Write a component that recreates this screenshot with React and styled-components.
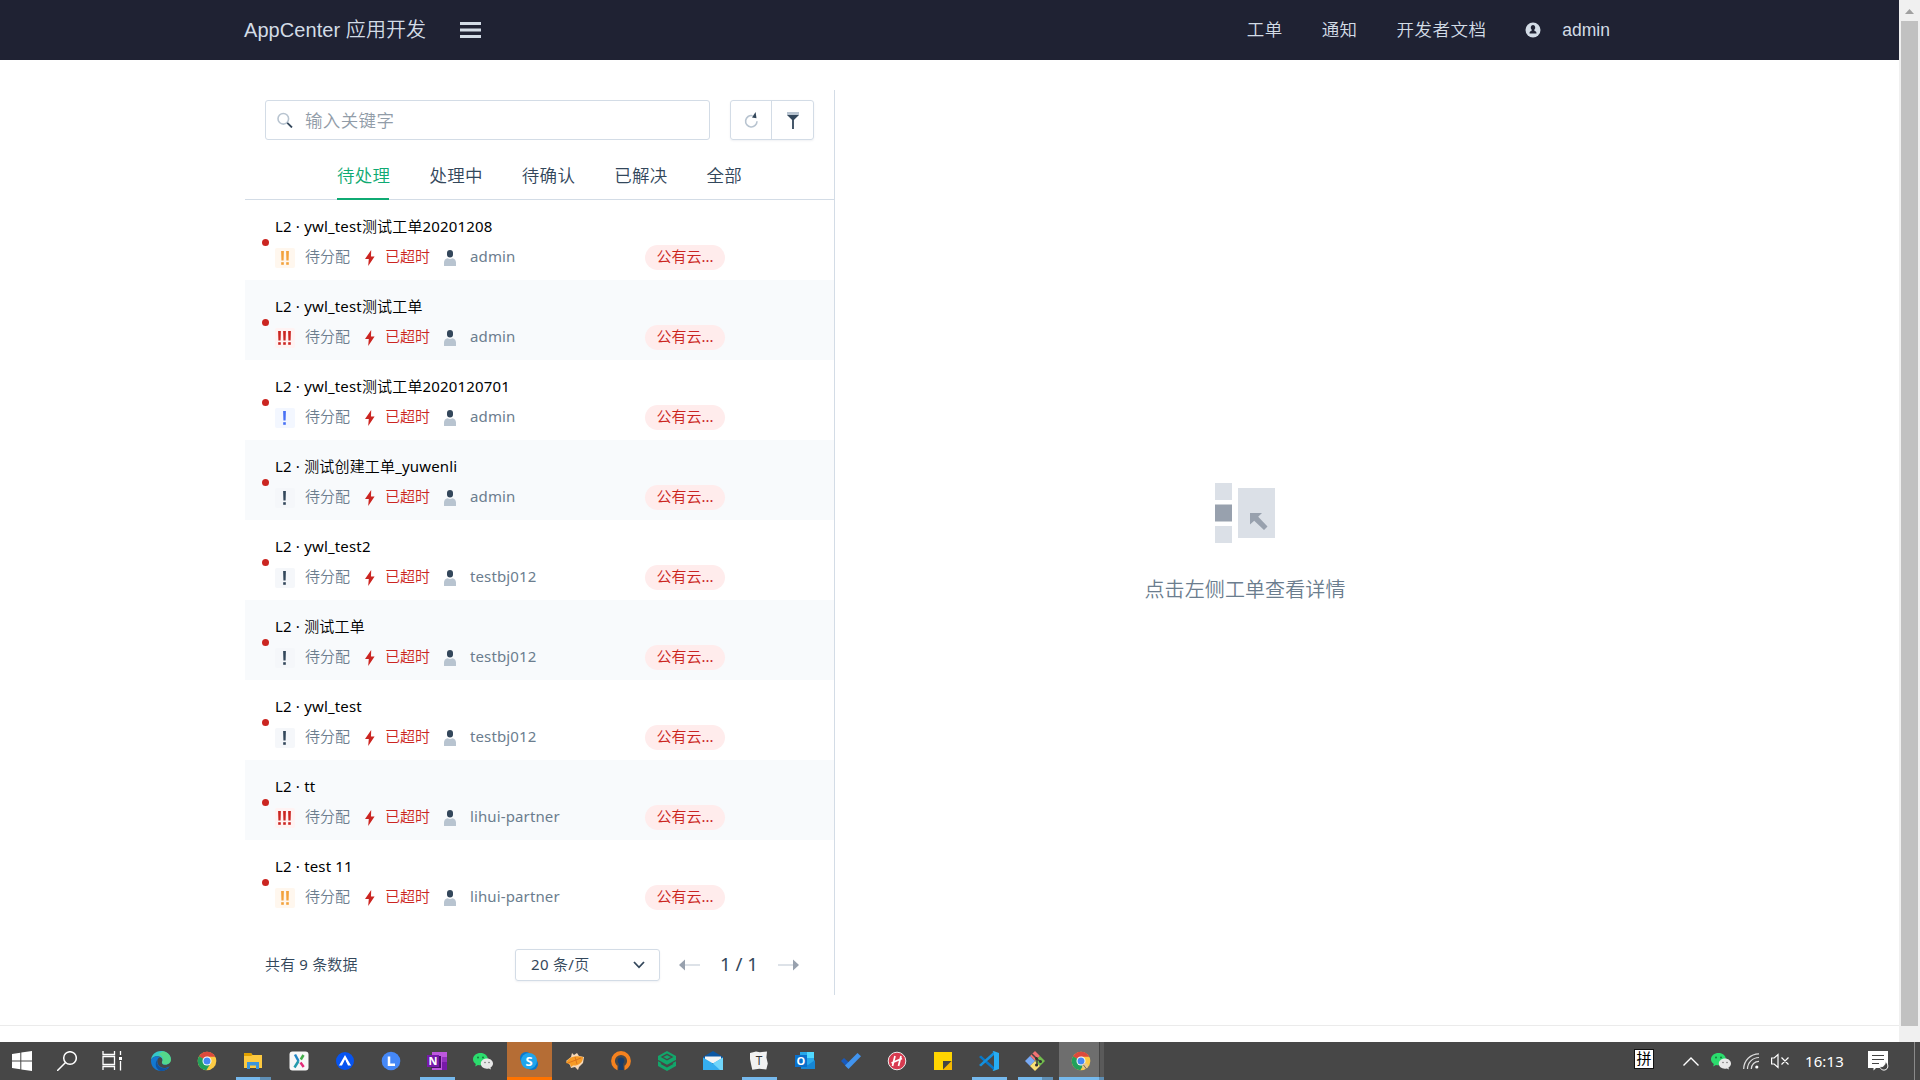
import React from 'react';
import styled, { createGlobalStyle, css } from 'styled-components';

const Global = createGlobalStyle`
  * { box-sizing: border-box; }
  html, body { margin: 0; padding: 0; background: #fff; overflow: hidden; }
  body { font-family: "Noto Sans", "Noto Sans CJK SC DemiLight", "Noto Sans CJK SC", sans-serif; }
  svg { display: block; flex: none; }
`;

const Screen = styled.div`
  width: 1920px;
  height: 1080px;
  display: flex;
  flex-direction: column;
  overflow: hidden;
`;
const Browser = styled.div`
  height: 1042px;
  display: flex;
`;
const Page = styled.div`
  width: 1899px;
  height: 1042px;
  display: flex;
  flex-direction: column;
`;
const ScrollTrack = styled.div`
  width: 21px;
  background: #f0f0f0;
  display: flex;
  flex-direction: column;
  align-items: center;
  padding-right: 1px;
`;
const ScrollUp = styled.div`
  height: 21px;
  padding-top: 9px;
`;
const ScrollThumb = styled.div`
  width: 17px;
  height: 1005px;
  background: #c1c1c1;
`;

const Header = styled.header`
  height: 60px;
  flex: none;
  background: #1f2233;
  color: #d3dce6;
  display: flex;
  align-items: center;
  padding: 0 289px 0 244px;
  font-family: "Liberation Sans", "Noto Sans CJK SC DemiLight", "Noto Sans CJK SC", sans-serif;
`;
const Brand = styled.div`
  width: 216px;
  font-size: 20px;
  line-height: 30px;
  letter-spacing: 0.07px;
  white-space: nowrap;
`;
const Nav = styled.nav`
  margin-left: auto;
  display: flex;
  align-items: center;
  gap: 39px;
  font-size: 17.5px;
  line-height: 28px;
  white-space: nowrap;
`;
const NavLink = styled.span`
  letter-spacing: 0.45px;
`;
const Account = styled.div`
  display: flex;
  align-items: center;
  gap: 21px;
`;

const Main = styled.main`
  width: 1410px;
  height: 905px;
  margin: 30px 0 30px 245px;
  display: flex;
`;
const ListPane = styled.section`
  width: 590px;
  border-right: 1px solid #d3dce6;
  display: flex;
  flex-direction: column;
`;
const SearchBar = styled.div`
  display: flex;
  gap: 20px;
  padding: 10px 20px 0;
`;
const SearchBox = styled.div`
  width: 445px;
  height: 40px;
  border: 1px solid #d3dce6;
  border-radius: 3px;
  display: flex;
  align-items: center;
  padding-left: 11px;
  gap: 12px;
  font-size: 17.5px;
  line-height: 28px;
  letter-spacing: 0.35px;
  color: #919ca8;
`;
const ButtonGroup = styled.div`
  display: flex;
  width: 84px;
  height: 40px;
  border: 1px solid #d3dce6;
  border-radius: 3px;
  box-shadow: 0 1px 2px rgba(60, 80, 110, 0.08);
`;
const ToolButton = styled.div`
  width: 40px;
  display: flex;
  align-items: center;
  justify-content: center;
  & + & {
    width: 42px;
    border-left: 1px solid #d3dce6;
  }
`;
const Tabs = styled.div`
  height: 60px;
  flex: none;
  display: flex;
  gap: 40px;
  padding-left: 92px;
  border-bottom: 1px solid #d3dce6;
  font-size: 17.5px;
  line-height: 28px;
  letter-spacing: 0.3px;
  white-space: nowrap;
`;
const Tab = styled.div`
  width: 52.4px;
  height: 60px;
  padding-top: 21px;
  color: ${(p) => (p.$active ? '#0faa73' : '#33475b')};
  border-bottom: 2px solid ${(p) => (p.$active ? '#0faa73' : 'transparent')};
`;
const Row = styled.article`
  height: 80px;
  flex: none;
  display: flex;
  align-items: flex-start;
  padding-left: 16.5px;
  background: ${(p) => (p.$shaded ? '#f8fafc' : '#fff')};
`;
const Dot = styled.span`
  width: 7px;
  height: 7px;
  margin: 39px 6.5px 0 0;
  border-radius: 50%;
  background: #cb2521;
`;
const Ticket = styled.div`
  padding-top: 15px;
`;
const Title = styled.div`
  font-size: 15px;
  line-height: 22px;
  height: 22px;
  margin-bottom: 8px;
  color: #000;
  white-space: nowrap;
  letter-spacing: 0.17px;
`;
const Meta = styled.div`
  display: grid;
  grid-template-columns: 30px 59px 21px 59px 26px 175px 80px;
  align-items: center;
  height: 25px;
  font-size: 15px;
  line-height: 24px;
  color: #6b7d8e;
  white-space: nowrap;
`;
const MetaText = styled.span`
  height: 25px;
  line-height: 23px;
  letter-spacing: ${(p) => (p.$latin ? '0.12px' : '0')};
  color: ${(p) => (p.$overdue ? '#cb2521' : 'inherit')};
`;
const levels = {
  blue: ['#4770f5', '#f3f7ff', 1],
  dark: ['#33475b', '#f5f7fa', 1],
  orange: ['#f3a23c', '#fff7ee', 2],
  red: ['#cb2521', '#fff3f3', 3],
};
const Priority = styled.span`
  width: 20px;
  height: 20px;
  padding-right: 1px;
  border-radius: 2px;
  display: flex;
  align-items: center;
  justify-content: center;
  gap: 2px;
  color: ${(p) => levels[p.$level][0]};
  background: ${(p) => levels[p.$level][1]};
`;
const Tag = styled.span`
  height: 25px;
  border-radius: 13px;
  background: #ffecec;
  color: #cb2521;
  text-align: center;
  line-height: 23px;
`;

const Pager = styled.footer`
  margin-top: auto;
  height: 60px;
  padding: 0 35px 0 20px;
  display: flex;
  align-items: center;
  font-size: 15px;
  line-height: 24px;
  color: #33475b;
  white-space: nowrap;
`;
const Total = styled.span`
  width: 250px;
  padding-bottom: 2px;
  letter-spacing: 0.15px;
`;
const PageSize = styled.div`
  width: 145px;
  height: 32px;
  border: 1px solid #d3dce6;
  border-radius: 3px;
  box-shadow: 0 1px 2px rgba(60, 80, 110, 0.08);
  display: flex;
  align-items: center;
  justify-content: space-between;
  padding: 0 14px 0 15px;
  margin-right: 19px;
`;
const PageSizeText = styled.span`
  padding-bottom: 2px;
  letter-spacing: 0.3px;
`;
const PageNo = styled.span`
  width: 78px;
  padding-bottom: 2px;
  text-align: center;
  font-size: 18.75px;
`;

const DetailPane = styled.section`
  flex: 1;
  display: flex;
  flex-direction: column;
  align-items: center;
  padding: 393px 0 0;
`;
const Hint = styled.p`
  margin: 31px 0 0;
  font-size: 20px;
  line-height: 32px;
  letter-spacing: 0.1px;
  color: #6b7d8e;
`;
const PageFooter = styled.div`
  border-top: 1px solid #ebebeb;
  flex: 1;
`;

const Taskbar = styled.div`
  height: 38px;
  background: #474747;
  display: flex;
`;
const Launcher = styled.div`
  width: 45px;
  height: 38px;
  flex: none;
  display: flex;
  flex-direction: column;
  align-items: center;
  justify-content: space-between;
  padding-top: 9px;
  margin-left: ${(p) => p.$gap || 0}px;
  ${(p) => p.$attention && css`background: #b56d35;`}
  ${(p) => p.$active && css`background: linear-gradient(90deg, #6e6e6e 40px, #454545 40px, #454545 41px, #5a5a5a 41px);`}
`;
const AppIcon = styled.svg`
  width: 20px;
  height: 20px;
  margin-right: 1px;
`;
const Running = styled.div`
  height: 3px;
  width: ${(p) => p.$w || 35}px;
  background: ${(p) =>
    p.$attention ? '#ff7300' : p.$multi ? `linear-gradient(90deg, #76b9ed ${p.$multi}px, #5f8fb5 ${p.$multi}px)` : '#76b9ed'};
`;
const Tray = styled.div`
  margin-left: auto;
  width: 286px;
  display: flex;
  align-items: center;
  color: #fff;
`;
const TrayItem = styled.div`
  margin-left: 12px;
`;
const Ime = styled.div`
  width: 20px;
  height: 20px;
  margin: 0 29px 4px 0;
  border: 1px solid #111;
  background: #fff;
  color: #000;
  font-family: "Noto Sans CJK SC", sans-serif;
  font-size: 15px;
  line-height: 16px;
  text-align: center;
`;
const Clock = styled.div`
  width: 39px;
  margin: 0 24px 0 16px;
  font-size: 15px;
  line-height: 20px;
  letter-spacing: 0.1px;
`;
const ShowDesktop = styled.div`
  width: 6px;
  height: 38px;
  margin-left: auto;
  border-left: 1px solid #8a8a8a;
`;

const Bang = () => (
  <svg width="3" height="14" viewBox="0 0 3 14" fill="currentColor">
    <path d="M0.1 0h2.800l-.3 9.500H.4z" /><rect x="0.2" y="11.200" width="2.600" height="2.600" />
  </svg>
);
const PriorityMark = ({ level }) => (
  <Priority $level={level}>
    {Array.from({ length: levels[level][2] }, (_, i) => <Bang key={i} />)}
  </Priority>
);
const Bolt = () => (
  <svg width="12" height="16" viewBox="0 0 12 16" fill="#cb2521"><path d="M7.200 0 1 9h3.800L4.200 16 10.600 6.600H7z" /></svg>
);
const Person = () => (
  <svg width="12" height="16" viewBox="0 0 12 16">
    <rect x="3" y="0" width="6" height="7.600" rx="3" fill="#33475b" />
    <path d="M0 16v-3.400C0 10 1.500 8.500 3.700 8.200c1.300 1 3.300 1 4.600 0C10.500 8.500 12 10 12 12.600V16z" fill="#b8c4d0" />
  </svg>
);
const SearchIcon = () => (
  <svg width="16" height="16" viewBox="0 0 16 16" fill="none">
    <circle cx="6.300" cy="6.800" r="5.300" stroke="#b8c4d0" strokeWidth="1.600" />
    <path d="m10.300 10.800 4.700 4.700" stroke="#33475b" strokeWidth="1.800" />
  </svg>
);
const RefreshIcon = () => (
  <svg width="16" height="17" viewBox="0 0 16 17" fill="none">
    <path d="M9.600 3.700A5.700 5.700 0 1 0 14 9.300" stroke="#b8c4d0" strokeWidth="1.600" />
    <path d="m12.600 0 .9 6.200-4.500-.8z" fill="#33475b" />
  </svg>
);
const FilterIcon = () => (
  <svg width="12" height="17" viewBox="0 0 12 17">
    <path d="M0 0h12v3H0z" fill="#b8c4d0" /><path d="M0 3h12L6.900 8v9H5.100V8z" fill="#33475b" />
  </svg>
);
const ArrowLeft = () => (
  <svg width="21" height="12" viewBox="0 0 21 12"><path d="M6 5h15v2H6z" fill="#dde2e8" /><path d="M0 6 6 .5v11z" fill="#98a1ae" /></svg>
);
const ArrowRight = () => (
  <svg width="21" height="12" viewBox="0 0 21 12"><path d="M0 5h15v2H0z" fill="#dde2e8" /><path d="m21 6-6-5.500v11z" fill="#98a1ae" /></svg>
);
const EmptyIcon = () => (
  <svg width="60" height="60" viewBox="0 0 60 60" fill="#dbe0e7">
    <path d="M0 0h17v17H0zM0 43h17v17H0zM23 5h37v50H23z" />
    <path d="M0 21.500h17v17H0zM35 30h12l-3.800 3.700L52.500 43.500 49 47l-9.800-9.300L35 41.500z" fill="#98a1ae" />
  </svg>
);

const Glyph = ({ children, x = 10, y = 14, size = 11, fill = '#fff', weight = 700 }) => (
  <text x={x} y={y} fontSize={size} fill={fill} fontWeight={weight} textAnchor="middle" fontFamily="Open Sans, sans-serif">{children}</text>
);
const Chrome = () => (
  <>
    <circle cx="10" cy="10" r="9.300" fill="#fccb45" />
    <path d="M10 10 1.900 5.400A9.300 9.300 0 0 1 18.200 5.700H10z" fill="#dc4a3d" />
    <path d="M10 10 1.950 5.300A9.300 9.300 0 0 0 9.300 19.300L13.700 12.200z" fill="#22a05b" />
    <circle cx="10" cy="10" r="4.500" fill="#fff" /><circle cx="10" cy="10" r="3.500" fill="#4688f4" />
  </>
);
const WeChat = () => (
  <>
    <path d="M7.500 2C3.400 2 0 4.700 0 8.200c0 2 1.100 3.700 2.800 4.800L2.200 15.500l2.700-1.500c5.500 1.300 10-1.300 10-5.800C14.900 4.700 11.600 2 7.500 2z" fill="#2bdc6d" />
    <circle cx="5" cy="6.500" r="1" fill="#167a3d" /><circle cx="10" cy="6.500" r="1" fill="#167a3d" />
    <path d="M14 7.500c-3.400 0-6.200 2.200-6.200 5.100 0 3.600 3.800 5.900 8.100 4.800l2 1.100-.4-2c1.600-.9 2.500-2.300 2.500-3.900 0-2.900-2.700-5.100-6-5.100z" fill="#e8e8e8" />
    <circle cx="12" cy="11.500" r=".8" fill="#777" /><circle cx="16" cy="11.500" r=".8" fill="#777" />
  </>
);

const apps = [
  { draw: <path d="M0 3 8.300 1.800V9.500H0zM9.300 1.600 20 0v9.500H9.300zM0 10.500h8.300v7.800L0 17zM9.300 10.500H20V20L9.300 18.500z" fill="#fff" /> },
  { draw: <g fill="none" stroke="#fff" strokeWidth="1.500"><circle cx="13" cy="7" r="6.300" /><path d="M8.500 11.500 0 20" /></g> },
  { draw: <g fill="none" stroke="#fff" strokeWidth="1.300"><path d="M1 0v3.500h11.500V0M1 19v-3.500h11.500V19M1 5.500h11.500v8H1zM18.500 0v4M18.500 10v9.500" /><path d="M17 6h3v3h-3z" fill="#fff" stroke="none" /></g> },
  { gap: 4, draw: <>
    <path d="M10 0C4 0 .2 4.500 0 9c2-5 11-5 11.500 0 0 1-.6 1.700-.6 2.500 0 3 5.500 3 7.500.5C20 10 20.300 7.500 19.300 5.500 18 2 14 0 10 0z" fill="#35c8c8" />
    <path d="M12 .2c5 .8 8 4.500 8 8.800 0 3-3 4.500-6 4.200-3-.4-3.500-1.500-2.500-3 1.500-3-1-6.500-4.500-7z" fill="#5fdd77" opacity=".75" />
    <path d="M0 9.500C.5 5.500 6 4 9 6.200 6 7 5.500 11 7.500 14c2.500 3.500 7 4 11.200 1.200C17 18.300 13.700 20 10 20 4.500 20-.3 15.500 0 9.500z" fill="#1378d0" />
    <path d="M6.500 8.500C5 12 7.500 17 13 17.300c2 .1 4-.7 5.700-2.100C17 18.300 13.700 20 10 20 5 19 3 12.500 6.500 8.500z" fill="#11529f" />
  </> },
  { draw: <Chrome /> },
  { multi: 24, draw: <><path d="M1 2h7l1.500 2H19v13H1z" fill="#fdc93f" /><path d="M1 2h7l1.500 2L8 5H1z" fill="#e0a000" /><path d="M4 18v-7h12v7h-3v-3.500H7V18z" fill="#3b95dc" /></> },
  { draw: <><rect x=".5" y=".5" width="19" height="19" rx="3" fill="#f7f7f7" /><path d="M6 3.500 9.500 10" stroke="#2185c5" strokeWidth="2.500" /><path d="m14.500 4-2.700 4.500" stroke="#42ad49" strokeWidth="2.500" /><path d="M9.500 10 5.500 16.500" stroke="#249aab" strokeWidth="2.500" /><path d="m11.500 11.500 3.200 4.500" stroke="#e42a78" strokeWidth="2.500" /></> },
  { draw: <><circle cx="10" cy="10" r="9" fill="#0754f0" /><path d="M10 4 4 14.500h3l3-6 3 6h3z" fill="#fff" /><path d="M10 8.500 12 14H9z" fill="#0754f0" /></> },
  { draw: <><circle cx="10" cy="10" r="9.300" fill="#4588f7" /><path d="M8 5.500v8.200h6" fill="none" stroke="#fff" strokeWidth="2.500" /></> },
  { run: true, draw: <><path d="M5 1h15v18H5z" fill="#bd58df" /><path d="M15 6h5v5h-5z" fill="#9332bf" /><path d="M15 11h5v8h-5z" fill="#7719aa" /><path d="M4 5h10v12H4z" fill="#451065" /><path d="M0 4h12v12H0z" fill="#7719aa" /><Glyph x={6} y={14}>N</Glyph></> },
  { draw: <WeChat /> },
  { attention: true, draw: <><circle cx="7" cy="7" r="6" fill="#0878cc" /><circle cx="13" cy="13" r="6" fill="#0878cc" /><circle cx="10" cy="10" r="8" fill="#20a5ec" /><Glyph y={14.500} size={13}>S</Glyph></> },
  { draw: <><path d="m1 10 5-4 1-4 2 2 3-2 2 3 5 1-1 6-4 4-1 3-3-3-4 1-1-3z" fill="#f6d8b8" /><path d="M1 12c2-5 8-8 17-6 0 6-5 9-10 8.500L6 16l-1-3z" fill="#f69b26" /><path d="m3 12 13-5M10 6l2 7" stroke="#d56b1c" strokeWidth=".8" /></> },
  { draw: <><circle cx="10" cy="10" r="8" fill="none" stroke="#f5821f" strokeWidth="3.800" /><path d="M6.500 20h7V15h-7z" fill="#474747" /><circle cx="10" cy="9.800" r="3.300" fill="#173c6b" /><path d="M8.300 11h3.400l1 8H7.300z" fill="#173c6b" /></> },
  { draw: <><path d="m10 0 9 5v10l-9 5-9-5V5z" fill="#12a66a" /><path d="m5 6 5 2.800L15 6l-5-2.700zM1 9.500l9 5 9-5M4 12.500l6 3.300 6-3.300" fill="none" stroke="#474747" strokeWidth="1.400" /></> },
  { draw: <><path d="M0 6 10 0l10 6v4H0z" fill="#0b57a3" /><path d="M2 5.500h16V12H2z" fill="#f4f4f4" /><path d="M0 6.500 10 12.500l10-6V19H0z" fill="#35aef0" /><path d="m20 6.500-10 6L17 19h3z" fill="#70d5fa" /></> },
  { run: true, draw: <><path d="m1 2 6-1.500 4 .8 7-.8-.6 6 1.400 6-1.500 6-7-.7-7 1L2 13 1 8z" fill="#f2f2f2" /><Glyph y={14.300} size={12} fill="#333" weight={400}>T</Glyph></> },
  { draw: <><path d="M5 1h14v14H5z" fill="#28a8ea" /><path d="M12 1h7v6h-7z" fill="#50d9ff" /><path d="m6 11 7 3 7-5v9H6z" fill="#1686d5" /><path d="M0 4h12v12H0z" fill="#0a70cc" /><Glyph x={6} y={14}>O</Glyph></> },
  { draw: <><path d="m0 10 3-3 6.500 6L7 17z" fill="#185abd" /><path d="M16.500 2 20 5.300 7.500 18 4 14.500z" fill="#4194ef" /></> },
  { draw: <><circle cx="10" cy="10" r="8.800" fill="#d83b50" stroke="#eee" strokeWidth="1" /><path d="m8 5-2.500 10M14 5l-2.500 10M4.500 12l10.500-4.500" fill="none" stroke="#fff" strokeWidth="1.700" /></> },
  { draw: <><path d="M1 1h18v18H1z" fill="#ffd500" /><path d="M10 10h9v9h-9z" fill="#f5b800" /><path d="M10 10h8.500L10 18.500z" fill="#444" /></> },
  { run: true, draw: <><path d="m0 6 2-1.500L15 16v3.500z" fill="#0878c8" /><path d="m0 14 2 1.500L15 4V.5z" fill="#1491df" /><path d="M14.500 0 20 2v16l-5.500 2L13.500 19l1.500-.5V1.500L13.500 1z" fill="#27adf3" /></> },
  { multi: 24, draw: <><path d="m10 0 5 5-5 5-5-5z" fill="#f17272" /><path d="m5 5 5 5-5 5-5-5z" fill="#78aaf5" /><path d="m15 5 5 5-5 5-5-5z" fill="#72bd4d" /><path d="m10 10 5 5-5 5-5-5z" fill="#f9e174" /><path d="m7 3 5 5v7M12 8l4 3" stroke="#444" strokeWidth="1.500" fill="none" /><circle cx="11.500" cy="7.500" r="1.500" fill="#333" /><circle cx="11.500" cy="14" r="1.500" fill="#333" /><circle cx="15.500" cy="10.500" r="1.500" fill="#333" /></> },
  { active: true, multi: 40, draw: <><Chrome /><circle cx="14" cy="15" r="2.800" fill="#e7c98e" /><path d="m12.500 14 3 4" stroke="#765" strokeWidth="1" /></> },
];

const tickets = [
  ['ywl_test测试工单20201208', 'orange', 'admin'],
  ['ywl_test测试工单', 'red', 'admin'],
  ['ywl_test测试工单2020120701', 'blue', 'admin'],
  ['测试创建工单_yuwenli', 'dark', 'admin'],
  ['ywl_test2', 'dark', 'testbj012'],
  ['测试工单', 'dark', 'testbj012'],
  ['ywl_test', 'dark', 'testbj012'],
  ['tt', 'red', 'lihui-partner'],
  ['test 11', 'orange', 'lihui-partner'],
];

export default function App() {
  return (
    <Screen>
      <Global />
      <Browser>
        <Page>
          <Header>
            <Brand>AppCenter 应用开发</Brand>
            <svg width="21" height="16" viewBox="0 0 21 16" fill="#d3dce6"><path d="M0 0h21v3H0zM0 6.500h21v3H0zM0 13h21v3H0z" /></svg>
            <Nav>
              <NavLink>工单</NavLink>
              <NavLink>通知</NavLink>
              <NavLink>开发者文档</NavLink>
              <Account>
                <svg width="16" height="16" viewBox="0 0 16 16"><circle cx="8" cy="8" r="7.500" fill="#d3dce6" /><path d="M8 3a2.300 2.600 0 0 0-1.300 4.700L6.500 9C5 9.300 4.500 10 4.500 11.500h7C11.500 10 11 9.300 9.500 9l-.2-1.300A2.300 2.600 0 0 0 8 3z" fill="#1f2233" /></svg>
                <span>admin</span>
              </Account>
            </Nav>
          </Header>
          <Main>
            <ListPane>
              <SearchBar>
                <SearchBox><SearchIcon /><span>输入关键字</span></SearchBox>
                <ButtonGroup>
                  <ToolButton><RefreshIcon /></ToolButton>
                  <ToolButton><FilterIcon /></ToolButton>
                </ButtonGroup>
              </SearchBar>
              <Tabs>
                {['待处理', '处理中', '待确认', '已解决', '全部'].map((t, i) => <Tab key={t} $active={i === 0}>{t}</Tab>)}
              </Tabs>
              {tickets.map(([title, level, owner], i) => (
                <Row key={title} $shaded={i % 2 === 1}>
                  <Dot />
                  <Ticket>
                    <Title>L2 · {title}</Title>
                    <Meta>
                      <PriorityMark level={level} />
                      <MetaText>待分配</MetaText>
                      <Bolt />
                      <MetaText $overdue>已超时</MetaText>
                      <Person />
                      <MetaText $latin>{owner}</MetaText>
                      <Tag>公有云...</Tag>
                    </Meta>
                  </Ticket>
                </Row>
              ))}
              <Pager>
                <Total>共有 9 条数据</Total>
                <PageSize>
                  <PageSizeText>20 条/页</PageSizeText>
                  <svg width="12" height="8" viewBox="0 0 12 8" fill="none" stroke="#33475b" strokeWidth="1.800"><path d="m1 1 5 5.300L11 1" /></svg>
                </PageSize>
                <ArrowLeft />
                <PageNo>1 / 1</PageNo>
                <ArrowRight />
              </Pager>
            </ListPane>
            <DetailPane>
              <EmptyIcon />
              <Hint>点击左侧工单查看详情</Hint>
            </DetailPane>
          </Main>
          <PageFooter />
        </Page>
        <ScrollTrack>
          <ScrollUp><svg width="9" height="5" viewBox="0 0 9 5" fill="#a0a0a0"><path d="M4.500 0 9 5H0z" /></svg></ScrollUp>
          <ScrollThumb />
        </ScrollTrack>
      </Browser>
      <Taskbar>
        {apps.map((a, i) => (
          <Launcher key={i} $gap={a.gap ?? (i > 3 ? 1 : 0)} $attention={a.attention} $active={a.active}>
            <AppIcon viewBox="0 0 20 20">{a.draw}</AppIcon>
            {(a.run || a.multi || a.attention) && (
              <Running $w={a.attention || a.active ? 45 : 35} $multi={a.multi} $attention={a.attention} />
            )}
          </Launcher>
        ))}
        <Tray>
          <Ime>拼</Ime>
          <svg width="16" height="9" viewBox="0 0 16 9" fill="none" stroke="#fff" strokeWidth="1.400"><path d="m.5 8.500 7.500-7.500 7.500 7.500" /></svg>
          <TrayItem><svg width="20" height="20" viewBox="0 0 20 20"><WeChat /></svg></TrayItem>
          <TrayItem>
            <svg width="16" height="16" viewBox="0 0 16 16" fill="none" stroke="#ddd" strokeWidth="1.200">
              <path d="M.7 16C.7 7.500 7.500.8 16 .8M4.500 16C4.500 9.600 9.600 4.500 16 4.500M8.300 16c0-4.300 3.400-7.700 7.700-7.700" /><circle cx="13.800" cy="14" r="1.600" fill="#fff" stroke="none" />
            </svg>
          </TrayItem>
          <TrayItem>
            <svg width="18" height="16" viewBox="0 0 18 16" fill="none" stroke="#fff" strokeWidth="1.200">
              <path d="M.6 5h2.600L7 1.500v13L3.200 11H.6zM10.500 4.500l7 7M17.500 4.500l-7 7" />
            </svg>
          </TrayItem>
          <Clock>16:13</Clock>
          <svg width="21" height="20" viewBox="0 0 21 20">
            <path d="M0 0h20v17H8l-2.500 2.500V17H0z" fill="#fff" />
            <path d="M4 4.500h12M4 8.500h12M4 12.500h7" stroke="#444" strokeWidth="1.200" />
            <path d="M17 10.500c1 3-2 6-5.500 5 1 3 4 4.500 6.500 3 2.800-1.600 2.300-6.500-1-8z" fill="#444" stroke="#fff" strokeWidth="1" />
          </svg>
          <ShowDesktop />
        </Tray>
      </Taskbar>
    </Screen>
  );
}
